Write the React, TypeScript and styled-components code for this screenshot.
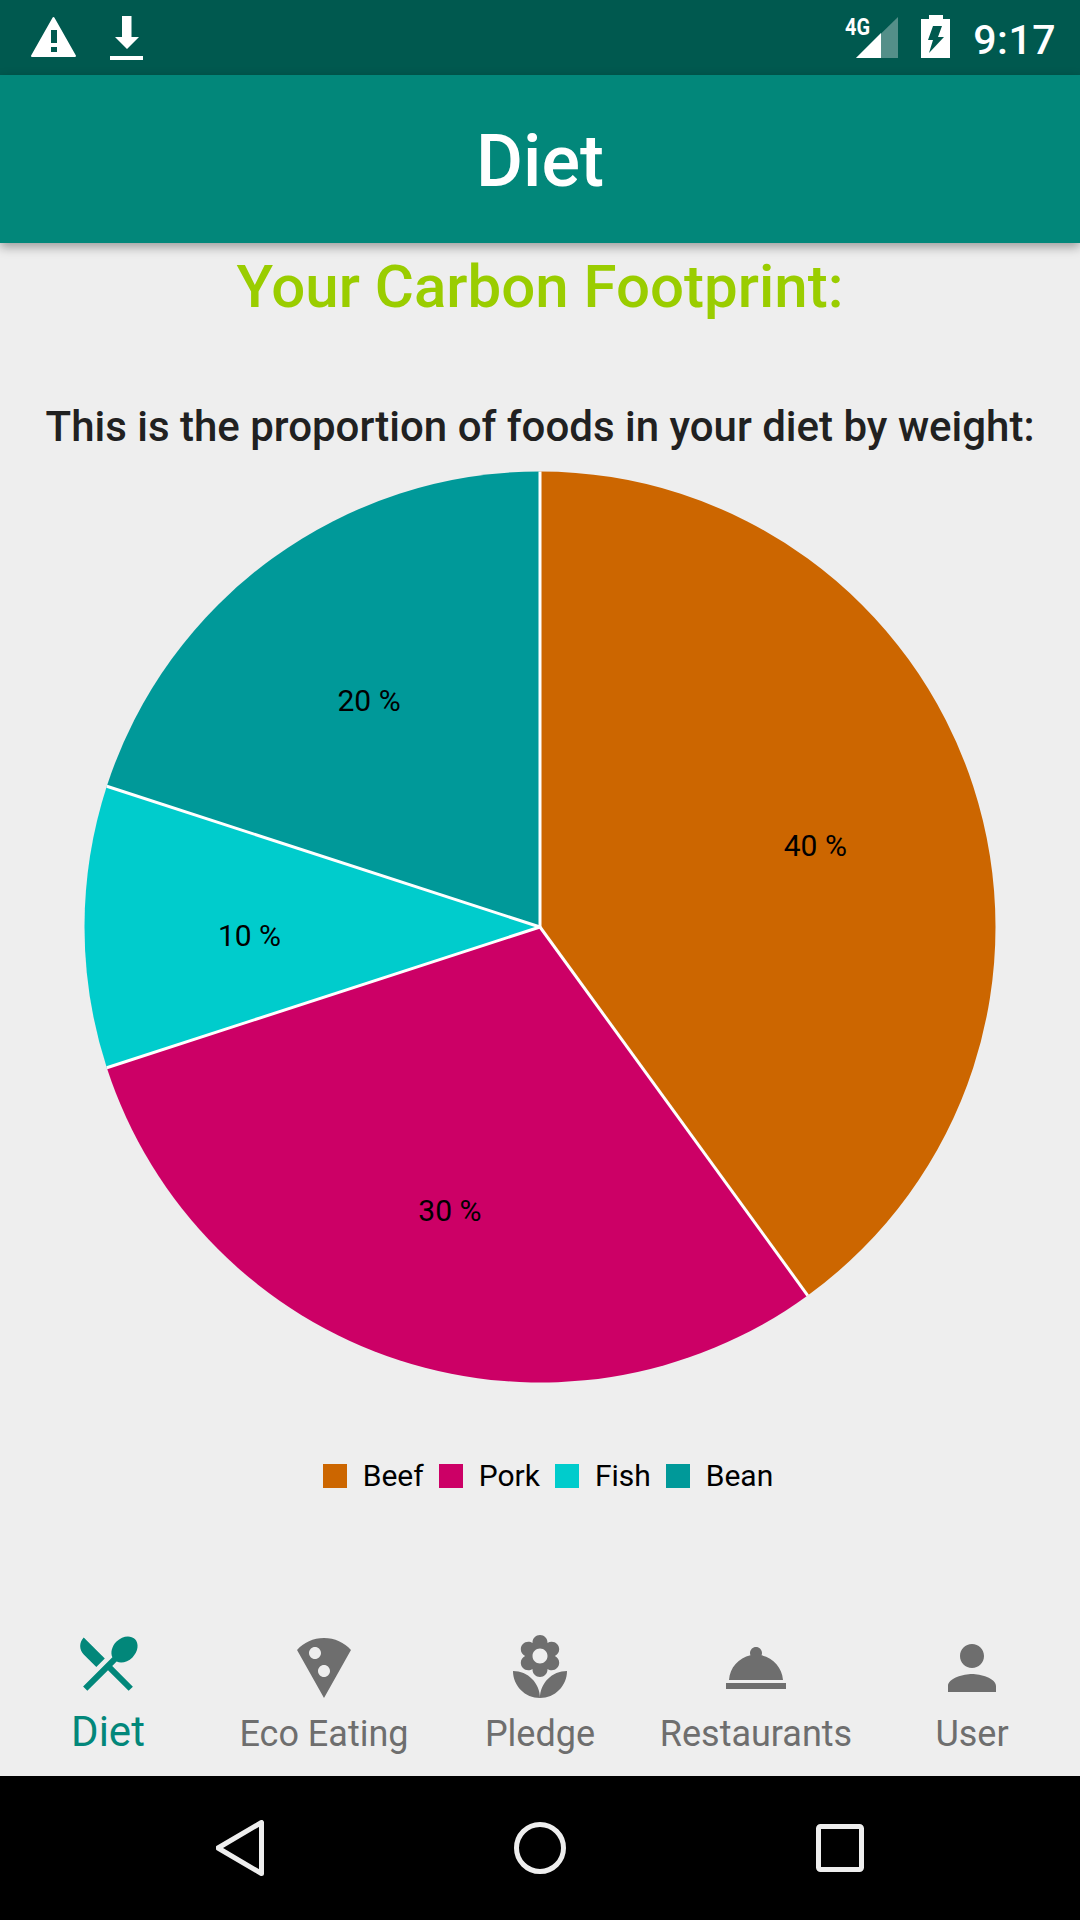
import React from "react";
import styled, { createGlobalStyle } from "styled-components";

const GlobalStyle = createGlobalStyle`
  html, body {
    margin: 0;
    padding: 0;
    background: #eeeeee;
  }
`;

const Screen = styled.div`
  width: 1080px;
  height: 1920px;
  display: flex;
  flex-direction: column;
  overflow: hidden;
  background: #eeeeee;
  font-family: Roboto, "Liberation Sans", sans-serif;
`;

const StatusBar = styled.div`
  height: 75px;
  flex: none;
  display: flex;
  justify-content: space-between;
  padding: 0 24px 0 31px;
  background: #00594f;
  color: #ffffff;
`;

const StatusGroup = styled.div`
  display: flex;
  align-items: center;
  gap: ${(p: { $gap: number }) => p.$gap}px;
`;

const Clock = styled.span`
  font-size: 41px;
  font-weight: 500;
  letter-spacing: 0.5px;
  position: relative;
  top: 2px;
`;

const AppBar = styled.header`
  height: 168px;
  flex: none;
  display: flex;
  align-items: center;
  justify-content: center;
  padding-top: 4px;
  box-sizing: border-box;
  background: #02877a;
  color: #ffffff;
  font-size: 72px;
  font-weight: 500;
  box-shadow: 0 4px 10px rgba(0, 0, 0, 0.35);
  position: relative;
  z-index: 1;
`;

const Content = styled.main`
  flex: 1;
  display: flex;
  flex-direction: column;
  align-items: center;
  padding-top: 14px;
`;

const Heading = styled.h1`
  margin: 0;
  font-size: 60px;
  line-height: 60px;
  font-weight: 500;
  color: #9acd00;
`;

const Subheading = styled.h2`
  margin: 86px 0 0;
  font-size: 42px;
  line-height: 48px;
  font-weight: 500;
  color: #212121;
`;

const PieChart = styled.svg`
  display: block;
  margin-top: 20px;
  flex: none;
`;

const PieLabel = styled.text`
  font-family: Roboto, "Liberation Sans", sans-serif;
  font-size: 30px;
  fill: #000000;
  text-anchor: middle;
  dominant-baseline: central;
`;

const Legend = styled.div`
  display: flex;
  align-items: center;
  gap: 15px;
  margin-top: 75px;
  padding-left: 16px;
`;

const LegendItem = styled.div`
  display: flex;
  align-items: center;
  gap: 16px;
  font-size: 30px;
  line-height: 36px;
  color: #000000;
`;

const LegendSwatch = styled.span<{ $color: string }>`
  width: 24px;
  height: 24px;
  background: ${(p) => p.$color};
`;

const BottomNav = styled.nav`
  height: 176px;
  flex: none;
  display: flex;
  background: #eeeeee;
`;

const Tab = styled.div<{ $active?: boolean }>`
  flex: 1;
  display: flex;
  flex-direction: column;
  align-items: center;
  padding-top: ${(p) => (p.$active ? 27 : 32)}px;
  color: ${(p) => (p.$active ? "#02877a" : "#6e6e6e")};
  font-size: ${(p) => (p.$active ? 42 : 36)}px;
`;

const TabIcon = styled.svg`
  display: block;
  width: 72px;
  height: 72px;
  fill: currentColor;
`;

const TabLabel = styled.span<{ $active?: boolean }>`
  line-height: 44px;
  margin-top: ${(p) => (p.$active ? 11 : 8)}px;
  white-space: nowrap;
`;

const SystemNav = styled.div`
  height: 144px;
  flex: none;
  background: #000000;
  display: flex;
  align-items: center;
  padding: 0 216px;
  justify-content: space-between;
`;

const SystemIcon = styled.svg`
  display: block;
  fill: none;
  stroke: #eeeeee;
  stroke-width: 5;
  stroke-linejoin: round;
`;

const slices = [
  { name: "Beef", value: 40, color: "#cc6600" },
  { name: "Pork", value: 30, color: "#cc0066" },
  { name: "Fish", value: 10, color: "#00cccc" },
  { name: "Bean", value: 20, color: "#009999" },
];

const CX = 456;
const CY = 456;
const R = 455.5;

const polar = (pct: number, r: number) => {
  const a = (pct / 100) * Math.PI * 2;
  return { x: CX + r * Math.sin(a), y: CY - r * Math.cos(a) };
};

const Pie = () => {
  let start = 0;
  const parts = slices.map((s) => {
    const from = start;
    start += s.value;
    return { ...s, from, to: start };
  });
  return (
    <PieChart width={912} height={912} viewBox="0 0 912 912">
      {parts.map((s) => {
        const a = polar(s.from, R);
        const b = polar(s.to, R);
        const large = s.value > 50 ? 1 : 0;
        return (
          <path
            key={s.name}
            fill={s.color}
            d={`M${CX} ${CY}L${a.x} ${a.y}A${R} ${R} 0 ${large} 1 ${b.x} ${b.y}Z`}
          />
        );
      })}
      {parts.map((s) => {
        const a = polar(s.from, R);
        return <line key={s.name} x1={CX} y1={CY} x2={a.x} y2={a.y} stroke="#ffffff" strokeWidth={3} />;
      })}
      {parts.map((s) => {
        const m = polar((s.from + s.to) / 2, 290);
        return (
          <PieLabel key={s.name} x={m.x - 0.5} y={m.y + 8}>
            {s.value} %
          </PieLabel>
        );
      })}
    </PieChart>
  );
};

const tabs = [
  {
    name: "Diet",
    active: true,
    d: "M8.1 13.34l2.83-2.83L3.91 3.5c-1.56 1.56-1.56 4.09 0 5.66l4.19 4.18zm6.78-1.81c1.53.71 3.68.21 5.27-1.38 1.91-1.91 2.28-4.65.81-6.12-1.46-1.46-4.2-1.1-6.12.81-1.59 1.59-2.09 3.74-1.38 5.27L3.7 19.87l1.41 1.41L12 14.41l6.88 6.88 1.41-1.41L13.41 13l1.47-1.47z",
  },
  {
    name: "Eco Eating",
    d: "M12 2C8.43 2 5.23 3.54 3.01 6L12 22l8.99-16C18.78 3.55 15.57 2 12 2zM7 7c0-1.1.9-2 2-2s2 .9 2 2-.9 2-2 2-2-.9-2-2zm5 8c-1.1 0-2-.9-2-2s.9-2 2-2 2 .9 2 2-.9 2-2 2z",
  },
  {
    name: "Pledge",
    d: "M12 22c4.97 0 9-4.03 9-9-4.97 0-9 4.03-9 9zM5.6 10.25c0 1.38 1.12 2.5 2.5 2.5.53 0 1.01-.16 1.42-.44l-.02.19c0 1.38 1.12 2.5 2.5 2.5s2.5-1.12 2.5-2.5l-.02-.19c.4.28.89.44 1.42.44 1.38 0 2.5-1.12 2.5-2.5 0-1-.59-1.85-1.43-2.25.84-.4 1.43-1.25 1.43-2.25 0-1.38-1.12-2.5-2.5-2.5-.53 0-1.01.16-1.42.44l.02-.19C14.5 2.12 13.38 1 12 1S9.5 2.12 9.5 3.5l.02.19c-.4-.28-.89-.44-1.42-.44-1.38 0-2.5 1.12-2.5 2.5 0 1 .59 1.85 1.43 2.25-.84.4-1.43 1.25-1.43 2.25zM12 5.5c1.38 0 2.5 1.12 2.5 2.5s-1.12 2.5-2.5 2.5S9.5 9.38 9.5 8s1.12-2.5 2.5-2.5zM3 13c0 4.97 4.03 9 9 9 0-4.97-4.03-9-9-9z",
  },
  {
    name: "Restaurants",
    d: "M2 17h20v2H2zm11.84-9.21c.1-.24.16-.51.16-.79 0-1.1-.9-2-2-2s-2 .9-2 2c0 .28.06.55.16.79C6.25 8.6 3.27 11.93 3 16h18c-.27-4.07-3.25-7.4-7.16-8.21z",
  },
  {
    name: "User",
    d: "M12 12c2.21 0 4-1.79 4-4s-1.79-4-4-4-4 1.79-4 4 1.79 4 4 4zm0 2c-2.67 0-8 1.34-8 4v2h16v-2c0-2.66-5.33-4-8-4z",
  },
];

const App = () => (
  <>
    <GlobalStyle />
    <Screen>
      <StatusBar>
        <StatusGroup $gap={34}>
          <svg width={45} height={75} viewBox="0 0 45 75">
            <path d="M22.5 18L44 56H1z" fill="#fff" stroke="#fff" strokeWidth={2} strokeLinejoin="round" />
            <rect x={20} y={30} width={6} height={13} fill="#00594f" />
            <rect x={20} y={47} width={6} height={5} fill="#00594f" />
          </svg>
          <svg width={33} height={75} viewBox="0 0 33 75">
            <path d="M12 16h9.500v21H29L17 49 5 37h7zM0 56h33v4H0z" fill="#fff" />
          </svg>
        </StatusGroup>
        <StatusGroup $gap={23}>
          <svg width={53} height={75} viewBox="0 0 53 75">
            <text
              x={0}
              y={35}
              fontFamily="Roboto, sans-serif"
              fontWeight={700}
              fontSize={23}
              fill="#fff"
              textLength={25}
              lengthAdjust="spacingAndGlyphs"
            >
              4G
            </text>
            <path d="M53 17V58H11z" fill="#fff" fillOpacity={0.33} />
            <path d="M36 33V58H11z" fill="#fff" />
          </svg>
          <svg width={29} height={75} viewBox="0 0 29 75">
            <path d="M8 15h14v4h7v39H0V19h8z" fill="#fff" />
            <path d="M12 26h9l-4 11h6L8 53l4-13H7z" fill="#00594f" />
          </svg>
          <Clock>9:17</Clock>
        </StatusGroup>
      </StatusBar>
      <AppBar>Diet</AppBar>
      <Content>
        <Heading>Your Carbon Footprint:</Heading>
        <Subheading>This is the proportion of foods in your diet by weight:</Subheading>
        <Pie />
        <Legend>
          {slices.map((s) => (
            <LegendItem key={s.name}>
              <LegendSwatch $color={s.color} />
              {s.name}
            </LegendItem>
          ))}
        </Legend>
      </Content>
      <BottomNav>
        {tabs.map((t) => (
          <Tab key={t.name} $active={t.active}>
            <TabIcon viewBox="0 0 24 24">
              <path d={t.d} />
            </TabIcon>
            <TabLabel $active={t.active}>{t.name}</TabLabel>
          </Tab>
        ))}
      </BottomNav>
      <SystemNav>
        <SystemIcon width={48} height={56} viewBox="0 0 48 56">
          <path d="M45.500 2.500v51L2 28z" />
        </SystemIcon>
        <SystemIcon width={52} height={52} viewBox="0 0 52 52">
          <circle cx={26} cy={26} r={23.500} />
        </SystemIcon>
        <SystemIcon width={48} height={48} viewBox="0 0 48 48">
          <rect x={2.500} y={2.500} width={43} height={43} rx={2} />
        </SystemIcon>
      </SystemNav>
    </Screen>
  </>
);

export default App;
